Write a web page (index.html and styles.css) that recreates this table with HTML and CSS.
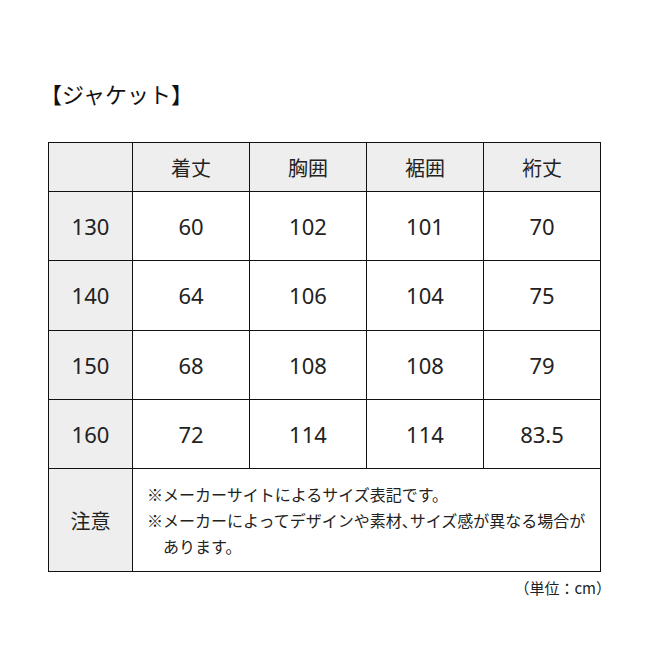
FILE: index.html
```html
<!DOCTYPE html>
<html lang="ja">
<head>
<meta charset="utf-8">
<link rel="stylesheet" href="styles.css">
</head>
<body>
<div class="page">
  <h2 class="title">【ジャケット】</h2>
  <table class="size">
    <colgroup>
      <col class="c0"><col class="c1"><col class="c1"><col class="c1"><col class="c1">
    </colgroup>
    <tr class="head">
      <th></th><th>着丈</th><th>胸囲</th><th>裾囲</th><th>裄丈</th>
    </tr>
    <tr class="row"><th>130</th><td>60</td><td>102</td><td>101</td><td>70</td></tr>
    <tr class="row"><th>140</th><td>64</td><td>106</td><td>104</td><td>75</td></tr>
    <tr class="row"><th>150</th><td>68</td><td>108</td><td>108</td><td>79</td></tr>
    <tr class="row"><th>160</th><td>72</td><td>114</td><td>114</td><td>83.5</td></tr>
    <tr class="note">
      <th>注意</th>
      <td colspan="4">
        <p>※メーカーサイトによるサイズ表記です。</p>
        <p><span class="line">※メーカーによってデザインや素材<span class="comma">、</span>サイズ感が異なる場合が</span><br>あります。</p>
      </td>
    </tr>
  </table>
  <p class="unit">（単位：cm）</p>
</div>
</body>
</html>
```
FILE: styles.css
```css
html, body {
  margin: 0;
  padding: 0;
  background: #fff;
}
body {
  font-family: "Noto Sans CJK JP", "Noto Sans", sans-serif;
  color: #222;
}
.page {
  padding: 78px 49px 0 48px;
}
.title {
  margin: 0 0 34px -8px;
  font-size: 22px;
  font-weight: 400;
  line-height: 30px;
  color: #111;
}
.size {
  border-collapse: collapse;
  width: 553px;
  table-layout: fixed;
}
.c0 { width: 84px; }
.c1 { width: 117px; }
.size th, .size td {
  border: 1px solid #111;
  text-align: center;
  font-weight: 400;
  padding: 0;
}
.size th {
  background: #eeeeee;
}
.head th {
  height: 48px;
  font-size: 20px;
}
.row th, .row td {
  height: 68.25px;
  font-size: 22px;
  font-family: "Noto Sans", "Noto Sans CJK JP", sans-serif;
}
.note th {
  height: 102px;
  font-size: 20px;
}
.note td {
  text-align: left;
  padding: 0 2px 0 14px;
  font-size: 16px;
  line-height: 26px;
}
.note p {
  margin: 0;
  padding-left: 1em;
  text-indent: -1em;
}
.line {
  white-space: nowrap;
}
.comma {
  font-feature-settings: "halt";
}
.unit {
  margin: 5px -10px 0 0;
  text-align: right;
  font-size: 15px;
  color: #222;
}
```
